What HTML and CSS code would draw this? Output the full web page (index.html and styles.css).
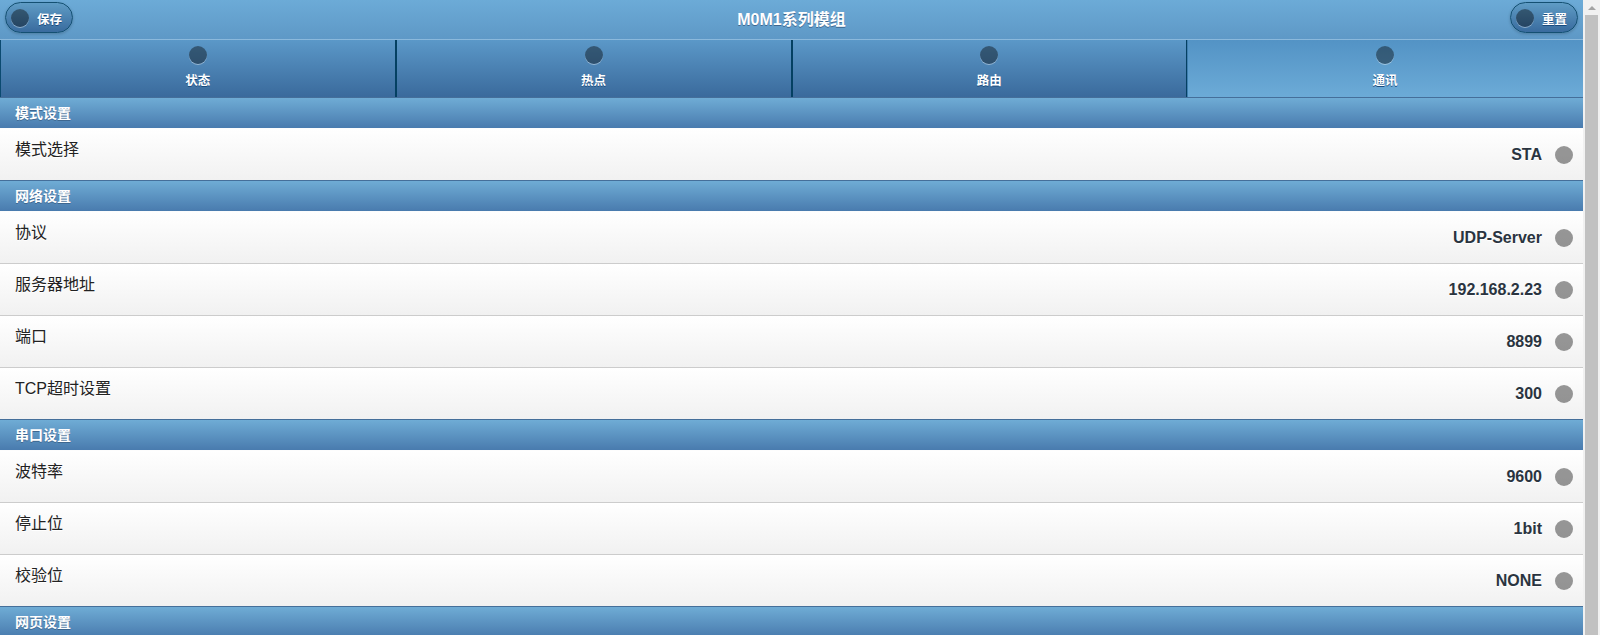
FILE: index.html
```html
<!DOCTYPE html>
<html lang="zh-CN">
<head>
    <meta charset="UTF-8">
    <meta name="viewport" content="width=device-width, initial-scale=1.0">
    <title>M0M1系列模组</title>
    <link rel="stylesheet" href="styles.css">
</head>
<body>
    <div class="page">
        <div class="header">
            <a class="hbtn" href="#"><span class="dot"></span><span class="hbtn-text">保存</span></a>
            <h1 class="title">M0M1系列模组</h1>
            <a class="hbtn" href="#"><span class="dot"></span><span class="hbtn-text">重置</span></a>
        </div>

        <div class="navbar">
            <a class="nav-item" href="#"><span class="dot"></span><span class="nav-text">状态</span></a>
            <a class="nav-item" href="#"><span class="dot"></span><span class="nav-text">热点</span></a>
            <a class="nav-item" href="#"><span class="dot"></span><span class="nav-text">路由</span></a>
            <a class="nav-item active" href="#"><span class="dot"></span><span class="nav-text">通讯</span></a>
        </div>

        <ul class="list">
            <li class="divider">模式设置</li>
            <li class="row"><span class="label">模式选择</span><span class="value">STA</span><span class="dot gray"></span></li>

            <li class="divider">网络设置</li>
            <li class="row"><span class="label">协议</span><span class="value">UDP-Server</span><span class="dot gray"></span></li>
            <li class="row"><span class="label">服务器地址</span><span class="value">192.168.2.23</span><span class="dot gray"></span></li>
            <li class="row"><span class="label">端口</span><span class="value">8899</span><span class="dot gray"></span></li>
            <li class="row"><span class="label">TCP超时设置</span><span class="value">300</span><span class="dot gray"></span></li>

            <li class="divider">串口设置</li>
            <li class="row"><span class="label">波特率</span><span class="value">9600</span><span class="dot gray"></span></li>
            <li class="row"><span class="label">停止位</span><span class="value">1bit</span><span class="dot gray"></span></li>
            <li class="row"><span class="label">校验位</span><span class="value">NONE</span><span class="dot gray"></span></li>

            <li class="divider">网页设置</li>
            <li class="row"><span class="label">用户名</span><span class="value">admin</span><span class="dot gray"></span></li>
        </ul>
    </div>
    <div class="rail">
        <div class="rail-btn"><span class="arrow"></span></div>
        <div class="rail-thumb"></div>
    </div>
</body>
</html>
```

FILE: styles.css
```css
html, body {
    height: 100%;
}
body {
    margin: 0;
    display: flex;
    font-family: "Liberation Sans", Arial, "Noto Sans CJK SC", sans-serif;
    background-color: #f9f9f9;
    color: #222;
    overflow: hidden;
}
a {
    text-decoration: none;
    color: inherit;
}
.page {
    flex: 1;
    min-width: 0;
    height: 100%;
    overflow: hidden;
}

/* scroll rail on the right */
.rail {
    width: 17px;
    display: flex;
    flex-direction: column;
    background-color: #f1f1f1;
}
.rail-btn {
    height: 15px;
    display: flex;
    justify-content: center;
    align-items: center;
}
.arrow {
    width: 0;
    height: 0;
    border-left: 4px solid transparent;
    border-right: 4px solid transparent;
    border-bottom: 4px solid #a3a3a3;
}
.rail-thumb {
    flex: 1;
    margin: 0 2px 0 2px;
    background-color: #c1c1c1;
}

/* header bar */
.header {
    display: flex;
    align-items: flex-start;
    padding: 2px 5px 0;
    box-sizing: border-box;
    height: 40px;
    background-image: linear-gradient(#6cabd7, #5e98c6);
    border-bottom: 1px solid #8bb9dc;
}
.title {
    flex: 1;
    margin: 0;
    text-align: center;
    font-size: 16px;
    line-height: 20px;
    padding-top: 8px;
    color: #fff;
    text-shadow: 0 1px 0 #3e6790;
}
.hbtn {
    display: flex;
    align-items: center;
    width: 68px;
    height: 31px;
    box-sizing: border-box;
    padding: 0 0 0 5px;
    border: 1px solid #145072;
    border-radius: 16px;
    background-image: linear-gradient(#5f9cc5, #396b9e);
    box-shadow: 0 1px 3px rgba(0, 0, 0, 0.2);
}
.hbtn-text {
    margin-left: 8px;
    font-size: 12.5px;
    font-weight: bold;
    color: #fff;
    text-shadow: 0 1px 0 #194b7e;
    padding-top: 1px;
}
.dot {
    display: block;
    width: 18px;
    height: 18px;
    border-radius: 50%;
    background-color: rgba(0, 0, 0, 0.4);
    box-shadow: 0 1px 0 rgba(255, 255, 255, 0.4);
    flex-shrink: 0;
}

/* tabs */
.navbar {
    display: flex;
    height: 57px;
}
.nav-item {
    flex: 1;
    display: flex;
    flex-direction: column;
    align-items: center;
    padding-top: 6px;
    border-left: 1px solid #044062;
    border-right: 1px solid #044062;
    background-image: linear-gradient(#5b98c8, #3a6a9c);
}
.nav-item:first-child {
    border-left-color: #0b4a70;
}
.nav-item.active {
    border-color: transparent;
    border-left: 1px solid #3f7eb0;
    background-image: linear-gradient(#5393c5, #6cabd7);
}
.nav-text {
    margin-top: 10px;
    font-size: 12.5px;
    line-height: 14px;
    font-weight: bold;
    color: #fff;
    text-shadow: 0 1px 0 #194b7e;
}

/* list */
.list {
    list-style: none;
    margin: 0;
    padding: 0;
}
.divider {
    height: 30px;
    line-height: 30px;
    padding-left: 15px;
    border-top: 1px solid #456f9a;
    background-image: linear-gradient(#6facd5, #497bae);
    color: #fff;
    font-size: 14px;
    font-weight: bold;
    text-shadow: 0 1px 0 #3e6790;
}
.row {
    display: flex;
    align-items: center;
    height: 51px;
    padding: 0 10px 0 15px;
    border-top: 1px solid #ccc;
    background-image: linear-gradient(#fff, #f1f1f1);
    text-shadow: 0 1px 0 #fff;
}
.divider + .row {
    border-top-color: #fdfdfd;
}
.label {
    flex: 1;
    align-self: flex-start;
    padding-top: 11px;
    font-size: 16px;
    line-height: 20px;
    color: #222;
}
.value {
    margin-right: 13px;
    font-size: 16px;
    font-weight: bold;
    color: #2a3440;
}
.dot.gray {
    box-shadow: none;
}
```
